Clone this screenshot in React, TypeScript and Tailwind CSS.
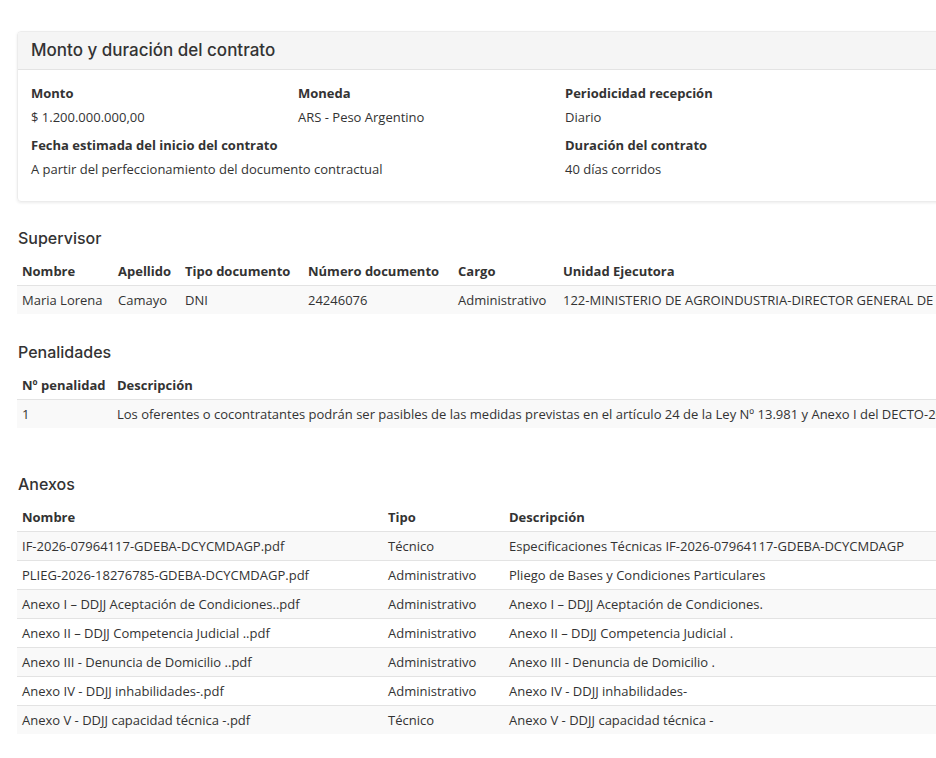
// Detalle de contrato: monto, supervisor, penalidades y anexos

const body = { fontFamily: '"Open Sans", "Liberation Sans", sans-serif' };
const heading = { fontFamily: 'Inter, "Open Sans", sans-serif' };

const supervisor = [
  ["Maria Lorena", "Camayo", "DNI", "24246076", "Administrativo", "122-MINISTERIO DE AGROINDUSTRIA-DIRECTOR GENERAL DE ADMINISTRACIÓN"],
];

const anexos = [
  ["IF-2026-07964117-GDEBA-DCYCMDAGP.pdf", "Técnico", "Especificaciones Técnicas IF-2026-07964117-GDEBA-DCYCMDAGP"],
  ["PLIEG-2026-18276785-GDEBA-DCYCMDAGP.pdf", "Administrativo", "Pliego de Bases y Condiciones Particulares"],
  ["Anexo I – DDJJ Aceptación de Condiciones..pdf", "Administrativo", "Anexo I – DDJJ Aceptación de Condiciones."],
  ["Anexo II – DDJJ Competencia Judicial ..pdf", "Administrativo", "Anexo II – DDJJ Competencia Judicial ."],
  ["Anexo III - Denuncia de Domicilio ..pdf", "Administrativo", "Anexo III - Denuncia de Domicilio ."],
  ["Anexo IV - DDJJ inhabilidades-.pdf", "Administrativo", "Anexo IV - DDJJ inhabilidades-"],
  ["Anexo V - DDJJ capacidad técnica -.pdf", "Técnico", "Anexo V - DDJJ capacidad técnica -"],
];

function Field({ label, value }: { label: string; value: string }) {
  return (
    <div className="mb-[10px]">
      <div className="font-bold leading-[18px] mb-[6px]">{label}</div>
      <div className="leading-[18px]">{value}</div>
    </div>
  );
}

function Table({ cols, widths, rows }: { cols: string[]; widths: string[]; rows: string[][] }) {
  return (
    <table className="table-fixed w-[1113px] border-collapse text-left whitespace-nowrap">
      <thead>
        <tr className="border-b border-[#e3e3e3]">
          {cols.map((c, i) => (
            <th key={c} className={`${widths[i]} px-[5px] py-[5px] leading-[18px] font-bold`}>
              {c}
            </th>
          ))}
        </tr>
      </thead>
      <tbody>
        {rows.map((r, i) => (
          <tr key={i} className={`border-t border-[#e3e3e3] ${i % 2 === 0 ? "bg-[#f9f9f9]" : "bg-white"}`}>
            {r.map((c, j) => (
              <td key={j} className="px-[5px] py-[5px] leading-[18px] overflow-hidden">
                {c}
              </td>
            ))}
          </tr>
        ))}
      </tbody>
    </table>
  );
}

export default function App() {
  return (
    <div className="w-full min-h-[758px] bg-white overflow-hidden text-[13px] text-[#333]" style={body}>
      <div className="w-[1130px] pl-[17px] pt-[31px] pb-10">
        {/* Monto y duración */}
        <div className="rounded-[4px] border border-[#ececec] shadow-[0_1px_3px_rgba(0,0,0,0.08)] overflow-hidden">
          <div className="bg-[#f5f5f5] border-b border-[#e3e3e3] px-[13px] py-[6px] h-[38px]">
            <h2 className="text-[17px] font-medium leading-[24px] text-[#333]" style={heading}>
              Monto y duración del contrato
            </h2>
          </div>
          <div className="px-[13px] pt-[14px] pb-[13px] grid grid-cols-[267px_267px_267px_1fr]">
            <Field label="Monto" value="$ 1.200.000.000,00" />
            <Field label="Moneda" value="ARS - Peso Argentino" />
            <Field label="Periodicidad recepción" value="Diario" />
            <div />
            <div className="col-span-2">
              <Field label="Fecha estimada del inicio del contrato" value="A partir del perfeccionamiento del documento contractual" />
            </div>
            <Field label="Duración del contrato" value="40 días corridos" />
          </div>
        </div>

        {/* Supervisor */}
        <h3 className="mt-[25px] mb-[8px] text-[16px] font-medium leading-[22px] pl-px" style={heading}>
          Supervisor
        </h3>
        <Table
          cols={["Nombre", "Apellido", "Tipo documento", "Número documento", "Cargo", "Unidad Ejecutora"]}
          widths={["w-[96px]", "w-[67px]", "w-[123px]", "w-[150px]", "w-[105px]", ""]}
          rows={supervisor}
        />

        {/* Penalidades */}
        <h3 className="mt-[27px] mb-[8px] text-[16px] font-medium leading-[22px] pl-px" style={heading}>
          Penalidades
        </h3>
        <Table
          cols={["Nº penalidad", "Descripción"]}
          widths={["w-[95px]", ""]}
          rows={[
            [
              "1",
              "Los oferentes o cocontratantes podrán ser pasibles de las medidas previstas en el artículo 24 de la Ley Nº 13.981 y Anexo I del DECTO-2019-59-GDEBA-GPBA.",
            ],
          ]}
        />

        {/* Anexos */}
        <h3 className="mt-[45px] mb-[8px] text-[16px] font-medium leading-[22px] pl-px" style={heading}>
          Anexos
        </h3>
        <Table cols={["Nombre", "Tipo", "Descripción"]} widths={["w-[366px]", "w-[121px]", ""]} rows={anexos} />
      </div>
    </div>
  );
}
